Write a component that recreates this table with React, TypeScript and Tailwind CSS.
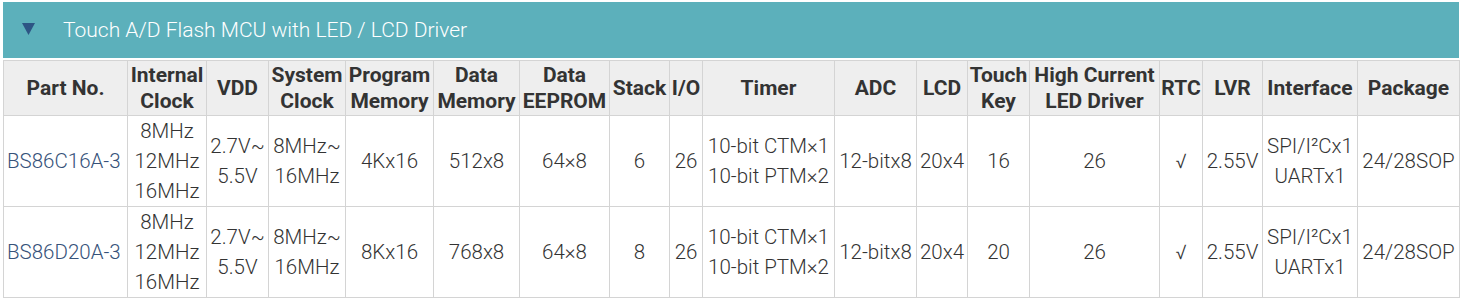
import React from "react";

const colClasses = [
  "w-[124px]", "w-[79px]", "w-[62px]", "w-[77px]", "w-[88px]", "w-[86px]", "w-[90px]", "w-[60px]", "w-[33px]",
  "w-[132px]", "w-[82px]", "w-[51px]", "w-[62px]", "w-[130px]", "w-[43px]", "w-[60px]", "w-[95px]", "w-[102px]",
];

const headers: string[][] = [
  ["Part No."],
  ["Internal", "Clock"],
  ["VDD"],
  ["System", "Clock"],
  ["Program", "Memory"],
  ["Data", "Memory"],
  ["Data", "EEPROM"],
  ["Stack"],
  ["I/O"],
  ["Timer"],
  ["ADC"],
  ["LCD"],
  ["Touch", "Key"],
  ["High Current", "LED Driver"],
  ["RTC"],
  ["LVR"],
  ["Interface"],
  ["Package"],
];

const rows: string[][][] = [
  [
    ["BS86C16A-3"],
    ["8MHz", "12MHz", "16MHz"],
    ["2.7V~", "5.5V"],
    ["8MHz~", "16MHz"],
    ["4Kx16"],
    ["512x8"],
    ["64×8"],
    ["6"],
    ["26"],
    ["10-bit CTM×1", "10-bit PTM×2"],
    ["12-bitx8"],
    ["20x4"],
    ["16"],
    ["26"],
    ["√"],
    ["2.55V"],
    ["SPI/I²Cx1", "UARTx1"],
    ["24/28SOP"],
  ],
  [
    ["BS86D20A-3"],
    ["8MHz", "12MHz", "16MHz"],
    ["2.7V~", "5.5V"],
    ["8MHz~", "16MHz"],
    ["8Kx16"],
    ["768x8"],
    ["64×8"],
    ["8"],
    ["26"],
    ["10-bit CTM×1", "10-bit PTM×2"],
    ["12-bitx8"],
    ["20x4"],
    ["20"],
    ["26"],
    ["√"],
    ["2.55V"],
    ["SPI/I²Cx1", "UARTx1"],
    ["24/28SOP"],
  ],
];

export default function App() {
  return (
    <div
      className="bg-white w-[1468px] h-[298px] overflow-hidden pl-[3px] pt-[2px]"
      style={{ fontFamily: "Roboto, 'Liberation Sans', sans-serif" }}
    >
      <div className="w-[1456px] h-[56px] bg-[#5cb0bb] flex items-center">
        <svg width="13" height="12" viewBox="0 0 13 12" className="ml-[19px] mt-[-2px]">
          <polygon points="0,0 13,0 6.5,12" fill="#2d5584" />
        </svg>
        <span className="ml-[28px] text-white text-[21px] font-light leading-none">
          Touch A/D Flash MCU with LED / LCD Driver
        </span>
      </div>
      <table className="mt-[2px] table-fixed border-collapse w-[1457px] text-[#333333]">
        <colgroup>
          {colClasses.map((c, i) => (
            <col key={i} className={c} />
          ))}
        </colgroup>
        <thead>
          <tr className="h-[55px] bg-[#eeeeee]">
            {headers.map((h, i) => (
              <th
                key={i}
                className="border border-[#d4d4d4] px-0 py-0 text-center align-middle font-bold text-[21px] leading-[26px] text-[#333333] whitespace-nowrap"
              >
                {h.map((l, j) => (
                  <div key={j}>{l}</div>
                ))}
              </th>
            ))}
          </tr>
        </thead>
        <tbody>
          {rows.map((r, ri) => (
            <tr key={ri} className="h-[91px]">
              {r.map((c, ci) => (
                <td
                  key={ci}
                  className={
                    ci === 0
                      ? "border border-[#d4d4d4] pl-[3px] pr-0 py-0 text-left align-middle font-light text-[20.5px] leading-[30px] text-[#36527a] whitespace-nowrap"
                      : "border border-[#d4d4d4] px-0 py-0 text-center align-middle font-light text-[20.5px] leading-[30px] text-[#333333] whitespace-nowrap"
                  }
                >
                  {c.map((l, j) => (
                    <div key={j}>{l}</div>
                  ))}
                </td>
              ))}
            </tr>
          ))}
        </tbody>
      </table>
    </div>
  );
}
